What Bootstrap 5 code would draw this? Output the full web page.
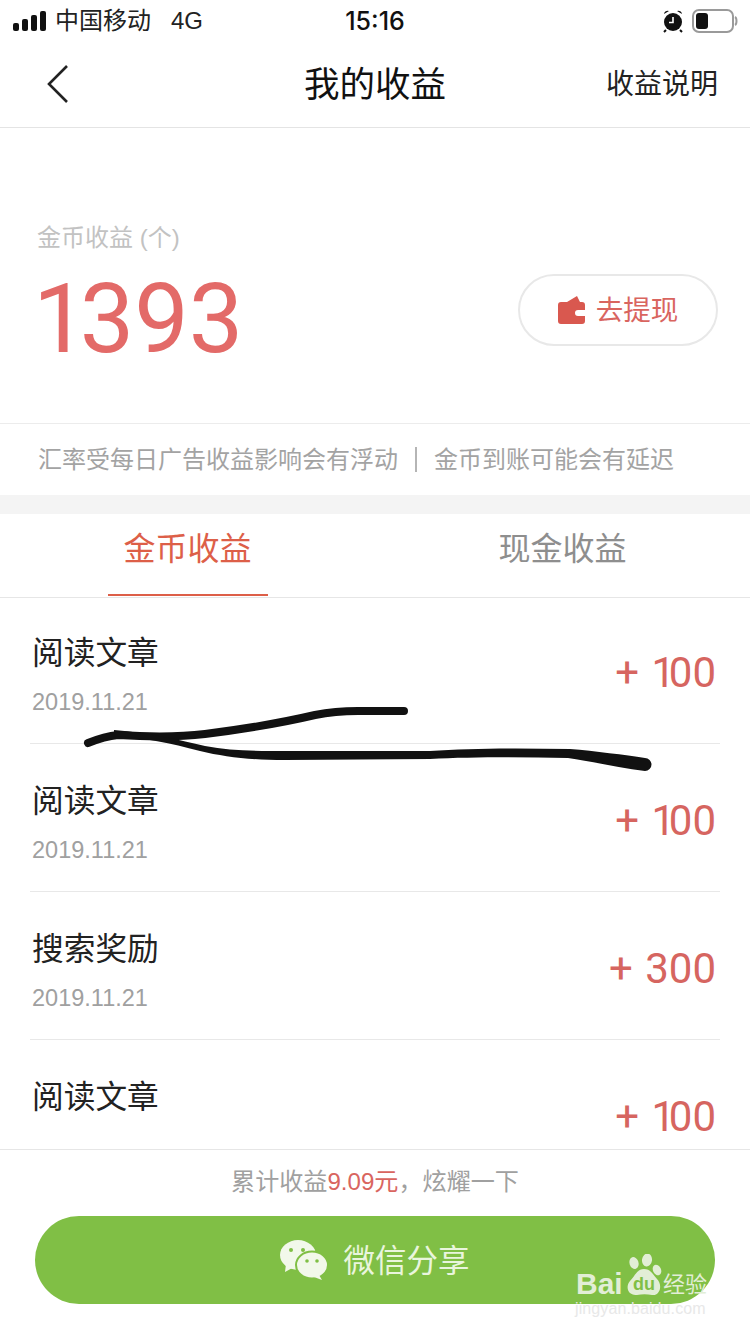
<!DOCTYPE html>
<html lang="zh-CN">
<head>
    <meta charset="UTF-8">
    <meta name="viewport" content="width=device-width, initial-scale=1.0">
    <title>我的收益</title>
    <link href="https://cdn.jsdelivr.net/npm/bootstrap@5.3.0/dist/css/bootstrap.min.css" rel="stylesheet">
    <style>
        html, body { margin: 0; height: 1334px; overflow: hidden; background: #fff; }
        body { font-family: "Liberation Sans", "Noto Sans CJK SC", sans-serif; color: #1c1c1c; }
        .screen { position: relative; width: 750px; height: 1334px; overflow: hidden; }
        .status-bar { height: 40px; padding: 2px 12px 0 13px; font-size: 24px; line-height: 40px; color: #222; }
        .status-carrier { margin-left: 7px; }
        .status-time { position: absolute; left: 0; right: 0; top: 0; text-align: center; font-family: Inter, "Liberation Sans", sans-serif; font-size: 25px; font-weight: 500; color: #111; line-height: 43px; }
        .top-nav { height: 88px; border-bottom: 1px solid #e4e4e4; padding: 0 32px 0 46px; position: relative; }
        .top-nav-title { position: absolute; left: 0; right: 0; top: 0; text-align: center; font-size: 35.500px; line-height: 91px; color: #111; }
        .top-nav-link { font-size: 28px; color: #222; padding-top: 3px; }
        /* digit 1 is narrower in the original font */
        .n1 { font-style: normal; letter-spacing: -.08em; }
        .summary { height: 296px; padding: 95px 32px 0 37px; border-bottom: 1px solid #ececec; }
        .summary-label { font-size: 24px; line-height: 30px; color: #c2c2c2; }
        .summary-num { font-family: Roboto, "Liberation Sans", sans-serif; font-size: 97px; line-height: 96px; color: #e36a68; margin-top: 18px; margin-left: -4px; }
        .withdraw { width: 200px; height: 72px; margin-top: 51px; border: 2px solid #e8e8e8; border-radius: 36px; color: #d9655f; font-size: 27.500px; gap: 11px; }
        .withdraw span { padding-top: 2px; }
        .notes { height: 71px; padding: 0 38px; font-size: 24px; color: #a3a3a3; }
        .notes-sep { width: 2px; height: 25px; background: #b5b5b5; margin: 0 17px; }
        .band { height: 19px; background: #f4f4f4; }
        .tabs-row { height: 84px; border-bottom: 1px solid #e6e6e6; }
        .tab-item { width: 50%; height: 83px; font-size: 32px; line-height: 70px; color: #8e8e8e; text-align: center; position: relative; }
        .tab-item.on { color: #dd5f48; }
        .tab-item.on::after { content: ""; position: absolute; left: 108px; bottom: 1px; width: 160px; height: 2px; background: #dd5f48; }
        .earn-list { height: 553px; margin-top: -2px; overflow: hidden; padding: 0 30px; }
        .earn-row { height: 148px; border-bottom: 1px solid #e8e8e8; padding: 0 4px 0 2px; }
        .earn-title { font-size: 31.700px; line-height: 40px; color: #222; padding-top: 37px; box-sizing: content-box; }
        .earn-date { font-size: 23.500px; line-height: 28px; color: #a0a0a0; margin-top: 15px; }
        .earn-amount { font-family: Roboto, "Liberation Sans", sans-serif; font-size: 42px; line-height: 44px; color: #d66560; padding-top: 55px; word-spacing: 2px; }
        .earn-amount .n1 { letter-spacing: -.15em; }
        .foot { height: 185px; border-top: 1px solid #e6e6e6; text-align: center; }
        .foot-text { font-size: 24.100px; line-height: 30px; color: #a0a0a0; padding-top: 17px; }
        .foot-text em { font-style: normal; color: #d9655f; }
        .share-btn { width: 680px; height: 88px; margin: 19px auto 0; background: #80bf45; border-radius: 44px; color: #e9f5dd; font-size: 31.500px; gap: 15px; }
        .share-btn span { padding-top: 3px; }
        .scribble { position: absolute; left: 0; top: 0; pointer-events: none; }
        .wm-bai { position: absolute; left: 576px; top: 1268px; font-size: 30px; line-height: 32px; font-weight: 700; color: #e2eed6; }
        .wm-paw { position: absolute; left: 625px; top: 1254px; }
        .wm-cn { position: absolute; left: 663px; top: 1272px; font-size: 22px; line-height: 26px; color: #e2eed6; white-space: nowrap; }
        .wm-jing { position: absolute; left: 575px; top: 1299px; font-size: 16px; line-height: 20px; color: #e8e8e8; letter-spacing: .1px; white-space: nowrap; }
    </style>
</head>
<body>
<div class="screen d-flex flex-column">
    <div class="status-bar d-flex align-items-center">
        <svg width="35" height="20" viewBox="0 0 35 20"><g fill="#111"><rect x="0" y="12" width="6" height="8" rx="2"/><rect x="9" y="8" width="6" height="12" rx="2"/><rect x="18" y="4" width="6" height="16" rx="2"/><rect x="27" y="0" width="6" height="20" rx="2"/></g></svg>
        <span class="status-carrier">中国移动</span><span class="ms-3 ps-1">4G</span>
        <div class="status-time">15:16</div>
        <div class="ms-auto d-flex align-items-center gap-2">
            <svg width="22" height="24" viewBox="0 0 22 24"><circle cx="11" cy="13" r="9" fill="#111"/><path d="M2 5a3.500 3.500 0 0 1 5-3zM20 5a3.500 3.500 0 0 0-5-3z" fill="#111"/><path d="M11 8v5.500H7" stroke="#fff" stroke-width="1.600" fill="none"/><path d="M4 21l-2 2M18 21l2 2" stroke="#111" stroke-width="2"/></svg>
            <svg width="46" height="24" viewBox="0 0 46 24"><rect x="1" y="1" width="40" height="22" rx="6" fill="#fff" stroke="#9a9a9a" stroke-width="2"/><rect x="4" y="4" width="12" height="16" rx="3" fill="#111"/><path d="M43 8c2 1 2 7 0 8" stroke="#9a9a9a" stroke-width="2" fill="none"/></svg>
        </div>
    </div>
    <div class="top-nav d-flex align-items-center justify-content-between">
        <div class="top-nav-title">我的收益</div>
        <svg width="24" height="40" viewBox="0 0 24 40" class="position-relative"><path d="M21 2 3 20l18 18" stroke="#222" stroke-width="2.600" fill="none"/></svg>
        <span class="top-nav-link position-relative">收益说明</span>
    </div>
    <div class="summary d-flex justify-content-between">
        <div>
            <div class="summary-label">金币收益 (个)</div>
            <div class="summary-num"><i class="n1">1</i>393</div>
        </div>
        <div class="withdraw d-flex align-items-center justify-content-center">
            <svg width="27" height="28" viewBox="0 0 27 28"><path d="M3 6H9L19 0l3 6h2q3 0 3 3v5h-7a2.500 2.500 0 0 0 0 6h7v5q0 3-3 3H3q-3 0-3-3V9q0-3 3-3z" fill="#d9584f"/></svg>
            <span>去提现</span>
        </div>
    </div>
    <div class="notes d-flex align-items-center">
        <span>汇率受每日广告收益影响会有浮动</span><span class="notes-sep"></span><span>金币到账可能会有延迟</span>
    </div>
    <div class="band"></div>
    <div class="tabs-row d-flex">
        <div class="tab-item on">金币收益</div>
        <div class="tab-item">现金收益</div>
    </div>
    <div class="earn-list">
        <div class="earn-row d-flex justify-content-between">
            <div><div class="earn-title">阅读文章</div><div class="earn-date">2019.11.21</div></div>
            <div class="earn-amount">+ <i class="n1">1</i>00</div>
        </div>
        <div class="earn-row d-flex justify-content-between">
            <div><div class="earn-title">阅读文章</div><div class="earn-date">2019.11.21</div></div>
            <div class="earn-amount">+ <i class="n1">1</i>00</div>
        </div>
        <div class="earn-row d-flex justify-content-between">
            <div><div class="earn-title">搜索奖励</div><div class="earn-date">2019.11.21</div></div>
            <div class="earn-amount">+ 300</div>
        </div>
        <div class="earn-row d-flex justify-content-between">
            <div><div class="earn-title">阅读文章</div></div>
            <div class="earn-amount">+ <i class="n1">1</i>00</div>
        </div>
    </div>
    <div class="foot">
        <div class="foot-text">累计收益<em>9.09元</em>，炫耀一下</div>
        <div class="share-btn d-flex align-items-center justify-content-center">
            <svg width="48" height="40" viewBox="0 0 48 40">
                <ellipse cx="18" cy="15" rx="18" ry="15" fill="#f2f8ea"/><path d="M6 24 5 32l9-5z" fill="#f2f8ea"/>
                <ellipse cx="32" cy="25" rx="16" ry="13.500" fill="#f2f8ea" stroke="#80bf45" stroke-width="2"/><path d="M39 35l3 5-8-3z" fill="#f2f8ea"/>
                <circle cx="11" cy="10" r="2" fill="#80bf45"/><circle cx="23" cy="10" r="2" fill="#80bf45"/><circle cx="27" cy="21" r="1.800" fill="#80bf45"/><circle cx="37" cy="21" r="1.800" fill="#80bf45"/>
            </svg>
            <span>微信分享</span>
        </div>
    </div>

    <svg class="scribble" width="750" height="1334" viewBox="0 0 750 1334">
        <path d="M88 743C98 739 108 736 118 735C150 737 180 737 205 734C245 729 285 722 315 715C330 712 345 711 358 711L404 711" fill="none" stroke="#111" stroke-width="8" stroke-linecap="round" stroke-linejoin="round"/>
        <path d="M114 730C150 733 180 740 205 746C230 751 255 751 285 751L430 751C470 748 520 748 570 749C595 751 625 755 645 758A6.500 6.500 0 0 1 645 771C620 768 590 761 568 758C520 757 470 757 430 759L285 760C250 760 225 757 200 751C170 743 145 738 114 736Z" fill="#111"/>
    </svg>
    <div class="wm-bai">Bai</div>
    <svg class="wm-paw" width="38" height="44" viewBox="0 0 38 44">
        <g fill="#e2eed6"><ellipse cx="9" cy="9" rx="4.500" ry="6" transform="rotate(-18 9 9)"/><ellipse cx="22" cy="6" rx="5" ry="6.500" transform="rotate(8 22 6)"/><ellipse cx="32" cy="16" rx="4" ry="5.500" transform="rotate(-25 32 16)"/>
        <path d="M19 15C26 15 28 21 32 25C38 31 35 42 27 41C22 40 17 40 12 41C3 42 0 33 5 27C10 22 12 15 19 15Z"/></g>
        <text x="8" y="36" font-family="Liberation Sans, sans-serif" font-size="18" font-weight="700" fill="#80bf45">du</text>
    </svg>
    <div class="wm-cn">经验</div>
    <div class="wm-jing">jingyan.baidu.com</div>
</div>
</body>
</html>
